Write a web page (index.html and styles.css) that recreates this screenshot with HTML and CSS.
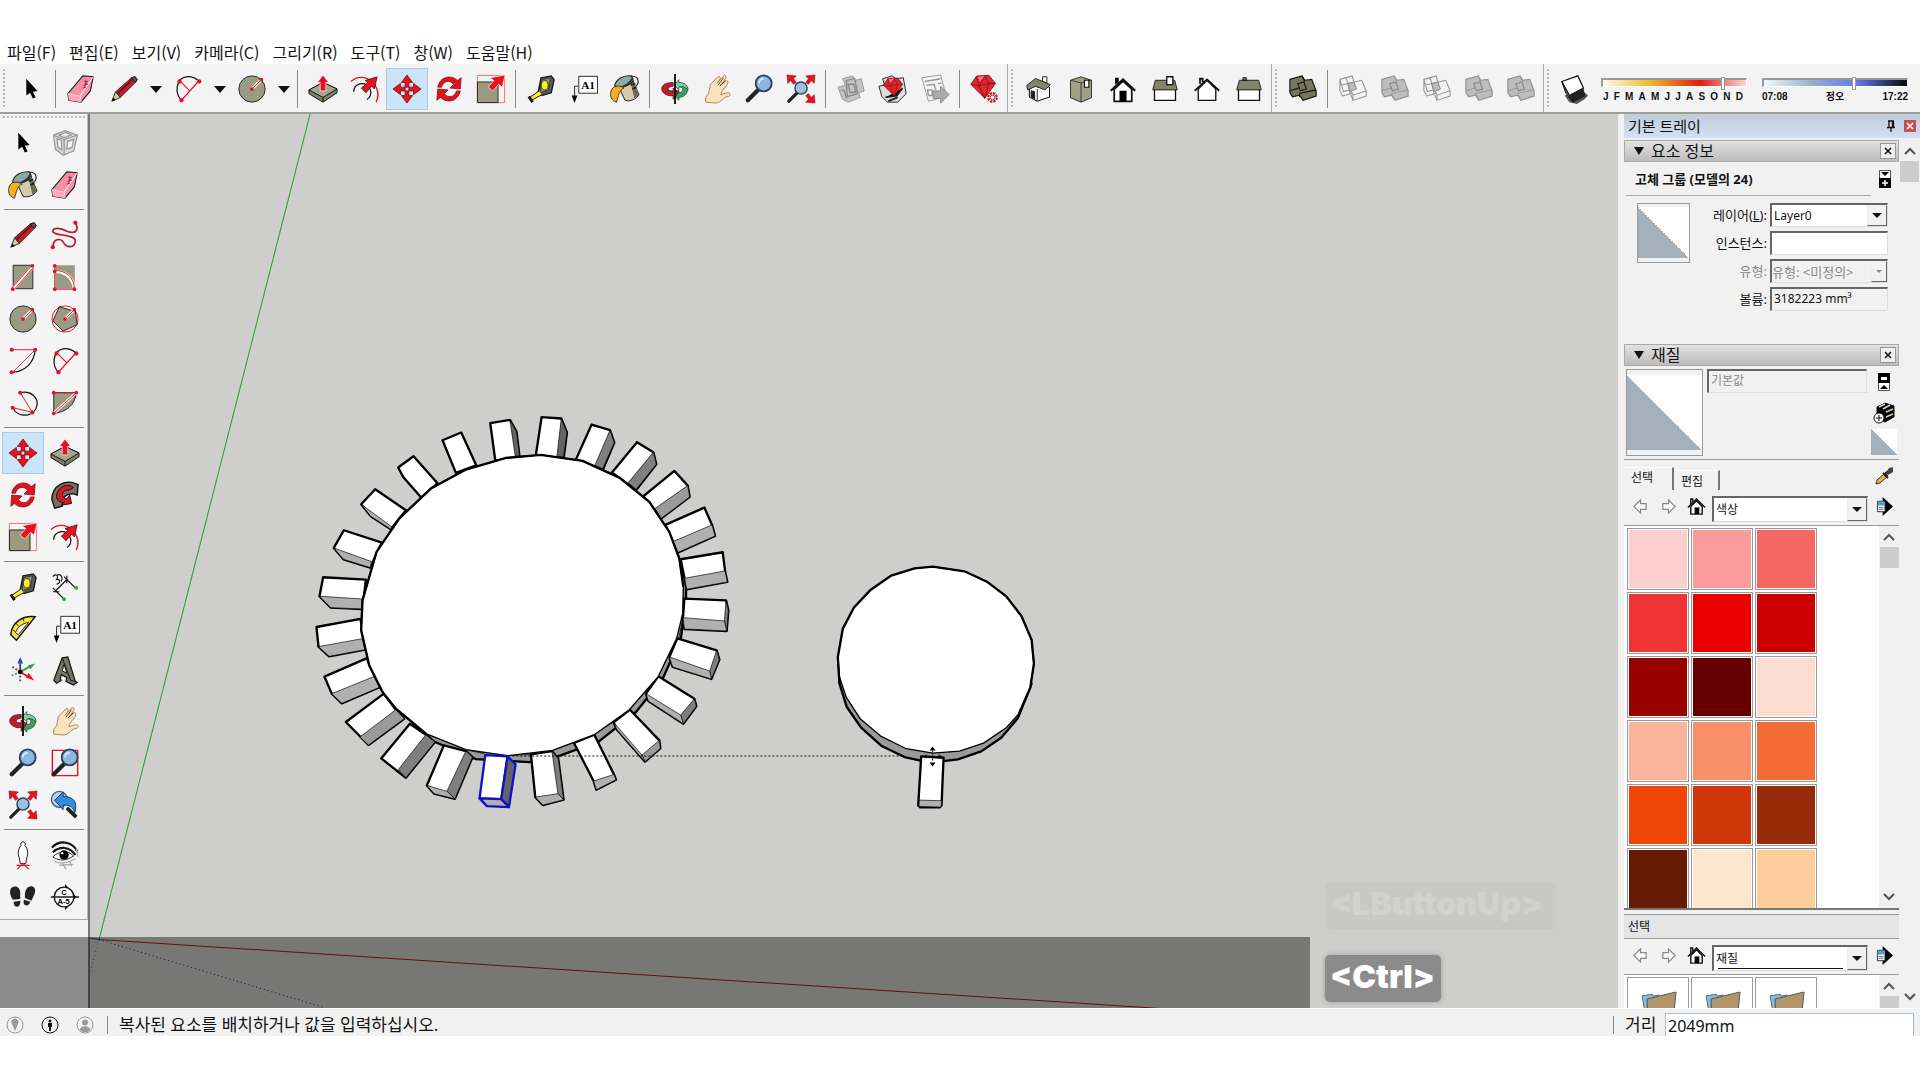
FILE: index.html
```html
<!DOCTYPE html>
<html lang="ko">
<head>
  <meta charset="UTF-8">
  <meta name="viewport" content="width=device-width, initial-scale=1.0">
  <title>SketchUp</title>
  <link rel="stylesheet" href="styles.css">
</head>
<body>

  <!-- icon set -->
  <svg class="icon-set" aria-hidden="true">
    <symbol id="i-cursor" viewBox="0 0 32 32"><path d="M11 5v18l4-3 3 6 3-1-3-6 5-1z"/></symbol>
    <symbol id="i-eraser" viewBox="0 0 32 32">
      <path d="M18 2l11 1-3 15-10 12-13-2-1-7z" fill="#f78fa7" stroke="#222" stroke-width="1.2"/>
      <path d="M2 21l13 3L29 3M15 24l1 6" fill="none" stroke="#fff"/><path d="M2 21l13 3 1 6-13-2z" fill="#ffa9bb"/>
      <path d="M21 6l-1 2 3 0-3 2 3 1-4 1 2 2-3 1" fill="none" stroke="#7d2740"/>
    </symbol>
    <symbol id="i-pencil" viewBox="0 0 32 32">
      <path d="M7 19L24 4l4-1 2 3-1 2-17 17z" fill="#c8202a" stroke="#222"/><path d="M9 21L26 5" stroke="#6c1016" stroke-width="2"/>
      <path d="M7 19l5 6-9 4z" fill="#d9cfa0" stroke="#222"/><path d="M3 29l4-1-2-3z"/><path d="M24 4l4-1 2 3-2 3z" fill="#555" stroke="#222"/>
    </symbol>
    <symbol id="i-arc" viewBox="0 0 32 32">
      <path d="M10 29C1 21 3 5 14 3c6-1 12 2 15 6" fill="none" stroke="#111" stroke-width="1.3"/>
      <path d="M7 7l11 11M9 28L27 8" stroke="#e8111d" stroke-width="1.2"/><g fill="#e8111d"><circle cx="7" cy="8" r="2.3"/><circle cx="28" cy="8" r="2.3"/><circle cx="9" cy="28" r="2.3"/></g>
    </symbol>
    <symbol id="i-circle" viewBox="0 0 32 32">
      <circle cx="16" cy="16" r="14" fill="#9b9b84" stroke="#222"/><path d="M16 16l9-9" stroke="#fff" stroke-width="3"/><path d="M16 16l9-9" stroke="#e8111d"/>
      <g fill="#e8111d"><circle cx="16" cy="16" r="2"/><circle cx="26" cy="6" r="2"/></g>
    </symbol>
    <symbol id="i-push" viewBox="0 0 32 32">
      <path d="M1 17l15-8 15 7v4L16 30 1 21z" fill="#7f7f6b" stroke="#111"/><path d="M1 17l15-8 15 7-15 9z" fill="#a5a58f" stroke="#111"/><path d="M16 25v5" stroke="#111"/>
      <path d="M16 1l6 8h-3v9h-6V9h-3z" fill="#e8111d" stroke="#fff" stroke-width=".7"/>
    </symbol>
    <symbol id="i-offset" viewBox="0 0 32 32">
      <path d="M1 8C9 1 18 3 24 9s7 14 4 21" fill="none" stroke="#e8111d" stroke-width="1.5"/><path d="M4 19c0-9 12-12 17-4 3 6 0 11-3 12" fill="none" stroke="#111" stroke-width="1.3"/>
      <path d="M29 3l-3 13-3-3-6 7-5-5 7-6-3-2z" fill="#e8111d" stroke="#111" stroke-width=".7"/>
    </symbol>
    <symbol id="i-move" viewBox="0 0 32 32">
      <path id="mv" d="M16 1l6 8h-4v5h-4V9h-4z" fill="#e8111d" stroke="#7a0910" stroke-width=".8"/>
      <use href="#mv" transform="rotate(90 16 16)"/><use href="#mv" transform="rotate(180 16 16)"/><use href="#mv" transform="rotate(270 16 16)"/>
    </symbol>
    <symbol id="i-rotate" viewBox="0 0 32 32">
      <path id="rt" d="M4 14C6 3 18 0 25 7l4-3-1 12-11-1 4-4C17 6 10 7 8 14z" fill="#dd1420" stroke="#8d0a12" stroke-width=".8"/><use href="#rt" transform="rotate(180 16 16)"/>
    </symbol>
    <symbol id="i-scale" viewBox="0 0 32 32">
      <path d="M1.500 1.500h29v29h-29z" fill="none" stroke="#f26b70"/><path d="M1.500 8.500h22v22h-22z" fill="#9b9b84" stroke="#222"/>
      <path d="M31 1l-3 13-4-3-6 7-5-4 6-7-4-3z" fill="#e8111d" stroke="#fff" stroke-width=".7"/>
    </symbol>
    <symbol id="i-tape" viewBox="0 0 32 32">
      <path d="M16 4l11-2 3 4-3 14-10 3-4-4z" fill="#5c5c4e" stroke="#111" stroke-width="1.3"/><path d="M17 6l9-2-2 13-9 3z" fill="#8f8f7b" stroke="#222" stroke-width=".7"/><ellipse cx="20" cy="12" rx="3.600" ry="5" fill="#fdf01d" stroke="#333"/>
      <path d="M14 18L4 25l2 3 11-6" fill="#fdf01d" stroke="#111"/><path d="M3 24l4 6" stroke="#111" stroke-width="3"/>
    </symbol>
    <symbol id="i-text" viewBox="0 0 32 32">
      <path d="M11.500 2.500h20v18h-20z" fill="#fff" stroke="#222"/><path d="M11 13H7v12" fill="none" stroke="#222"/><path d="M4 23h6l-3 8z"/>
      <text x="14" y="16" class="glyph-a1">A1</text>
    </symbol>
    <symbol id="i-paint" viewBox="0 0 32 32">
      <path d="M21 5c2-5 9-2 9 3 0 3-2 5-4 6" fill="none" stroke="#222" stroke-width="1.200"/>
      <path d="M9 13L24 7l7 15c-3 5-10 8-15 6z" fill="#d3cca9" stroke="#111"/><path d="M22 9l3-2 6 15-5 4z" fill="#6e6a5a"/><path d="M22 12l5-2M24 16l4-2" stroke="#222" stroke-width="2"/>
      <path d="M5 13C6 6 13 1 23 2l2 5c-5 6-12 8-20 6z" fill="#8fa8a9" stroke="#222" stroke-width="1.200"/><path d="M24 4c-2 6-9 10-16 11" fill="none" stroke="#333" stroke-width="2"/>
      <path d="M2 16c3-4 9-4 13-1-5 2-6 8-8 15-6-1-8-8-5-14z" fill="#f8ae1b" stroke="#333"/>
    </symbol>
    <symbol id="i-orbit" viewBox="0 0 32 32">
      <path d="M17 10c9-2 14 3 12 9-1 4-6 6-9 6v3l-5-6 5-5v3c4 0 5-3 4-5-2-2-5-1-7-1z" fill="#3d9d63" stroke="#14522b" stroke-width=".8"/><path d="M15 12l5-6v3c6 0 10 3 10 8-4-4-7-4-10-3v3z" fill="#86cda3" stroke="#14522b" stroke-width=".8"/>
      <path d="M14 9C6 9 1 12 2 17c1 4 6 7 12 6v4l6-8-6-4v3c-4 0-6-1-5-3 1-1 3-2 5-2z" fill="#b9202e" stroke="#5b0c14" stroke-width=".8"/><path d="M16 0v32" stroke="#111" stroke-width="2"/>
    </symbol>
    <symbol id="i-pan" viewBox="0 0 32 32">
      <path d="M4 30c-1-5 1-7 3-9l2-10 8-8c2-1 3 1 2 3l-3 4 7-8c2-1 4 1 2 3l-5 7 6-5c2 0 2 2 1 4l-6 8-1 3 7-2c4 0 4 3 1 4-5 0-7 6-13 7z" fill="#f8e2bd" stroke="#a08458"/><path d="M17 12l6-8M19 13l6-6" stroke="#4f402a"/>
    </symbol>
    <symbol id="i-zoom" viewBox="0 0 32 32">
      <path d="M15 17L4 28" stroke="#222" stroke-width="4.500" stroke-linecap="round"/><circle cx="21" cy="10" r="8.500" fill="#8db6e0" stroke="#2a4263" stroke-width="2"/><path d="M16 10c0-3 2-5 5-5" stroke="#d5e7f8" stroke-width="2" fill="none"/>
    </symbol>
    <symbol id="i-extents" viewBox="0 0 32 32">
      <path id="ex" d="M1 1l10 1-3 3 3 4-3 2-3-4-3 3z" fill="#e8111d" stroke="#8d0a12" stroke-width=".6"/><use href="#ex" transform="matrix(-1 0 0 1 32 0)"/><use href="#ex" transform="rotate(180 16 16)"/>
      <path d="M13 19L3 29" stroke="#222" stroke-width="3.500" stroke-linecap="round"/><circle cx="16" cy="15" r="6.500" fill="#9dc0e2" stroke="#2a4263" stroke-width="1.500"/>
    </symbol>
    <symbol id="i-window" viewBox="0 0 32 32"><path d="M2.500 2.500h27v27h-27z" fill="none" stroke="#e8111d" stroke-width="1.500"/><use href="#i-zoom"/></symbol>
    <symbol id="i-previous" viewBox="0 0 32 32">
      <circle cx="10" cy="10" r="8.500" fill="#b6cde4" stroke="#445c78" stroke-width="1.300"/><path d="M18 19l10 10" stroke="#222" stroke-width="4"/>
      <path d="M5 11l9-9v5c12 0 16 6 12 19 0-8-5-10-12-10v5z" fill="#2d8ee0" stroke="#17395f"/>
    </symbol>
    <symbol id="i-warehouse" viewBox="0 0 32 32">
      <path d="M2 14l8-2-3-7 11-3 2 5 7-2 3 13-6 2 2 5-13 5-6-3z" fill="#c4c4c4" stroke="#999"/><path d="M11 7l9-2 3 16-11 3zM13 11h6l2 8-6 1zM5 17l4 1 2 8" fill="none" stroke="#8c8c8c" stroke-width="1.500"/>
    </symbol>
    <symbol id="i-gem" viewBox="0 0 32 32"><path d="M8 2l15-1 8 10-13 18L1 12z" fill="#e2242c" stroke="#6c0c10"/><path d="M1 12l10 2 12-3 8 0M8 2l3 12 7 15 5-18-5-9-7 12" fill="none" stroke="#8a0e14"/><path d="M9 3l9-1-6 7z" fill="#f4777b"/></symbol>
    <symbol id="i-extension" viewBox="0 0 32 32">
      <path d="M1 13l6-1-2-7 10-3 4 3 8-1 3 17-9 9-11 0-6-6z" fill="#ddd" stroke="#222"/><path d="M8 25l12-2 6-8M11 29l10-4" stroke="#222" stroke-width="2"/><use href="#i-gem" x="5" y="3" width="22" height="23"/>
    </symbol>
    <symbol id="i-share" viewBox="0 0 32 32">
      <path d="M2 4l20-3 6 23-19 5z" fill="#f5f5f5" stroke="#999"/><path d="M5 8l17-3M7 12l8-1 2 6M19 10l4 0M8 17h5v6H9z" fill="none" stroke="#999" stroke-width="1.500"/><path d="M14 18h8v-5l9 9-9 9v-5h-8z" fill="#aaa" stroke="#888"/>
    </symbol>
    <symbol id="i-manager" viewBox="0 0 32 32"><use href="#i-gem" width="28" height="29"/><circle cx="24" cy="25" r="4.500" fill="#fff" stroke="#b7222a" stroke-width="2.500" stroke-dasharray="2.500 1"/><circle cx="24" cy="25" r="2.500" fill="none" stroke="#b7222a"/></symbol>
    <symbol id="i-iso" viewBox="0 0 32 32">
      <path d="M5 14L13 8l15 6v11l-14 5-9-5z" fill="#fff" stroke="#111" stroke-width="1.200"/><path d="M2 12l10-8 17 7-6 6-11-4-9 4z" fill="#85856f" stroke="#111"/><path d="M14 16v13M7 18l4 1v8l-4-2z" fill="#222" stroke="#111"/><path d="M20 2h5v7l-5-2z" fill="#fff" stroke="#111"/>
    </symbol>
    <symbol id="i-top" viewBox="0 0 32 32"><path d="M4 6l12-4 12 4v20l-12 5-12-5z" fill="#a09f87" stroke="#222"/><path d="M4 6l12 3 12-3M16 9v22" fill="none" stroke="#333"/><path d="M20 6h5v8h-5z" fill="#fff" stroke="#111" stroke-width="1.300"/></symbol>
    <symbol id="i-front" viewBox="0 0 32 32"><path d="M6 16v14h20V16L16 7z" fill="#fff" stroke="#111" stroke-width="2"/><path d="M2 18L16 5l14 13" fill="none" stroke="#111" stroke-width="2.500"/><path d="M12 18h8v12h-8zM7 3h4v5l-4 3z"/></symbol>
    <symbol id="i-right" viewBox="0 0 32 32"><path d="M4 14h24v15H4z" fill="#fff" stroke="#111" stroke-width="1.500"/><path d="M5 6h22l3 11H2z" fill="#85856f" stroke="#111"/><path d="M18 2h7v9h-7z" fill="#fff" stroke="#111" stroke-width="1.500"/></symbol>
    <symbol id="i-back" viewBox="0 0 32 32"><path d="M6 16v13h20V16L16 6z" fill="#fff" stroke="#111" stroke-width="1.500"/><path d="M2 18L16 5l14 13M8 10V4h3v4" fill="none" stroke="#111" stroke-width="2"/></symbol>
    <symbol id="i-left" viewBox="0 0 32 32"><path d="M4 14h24v15H4z" fill="#fff" stroke="#111" stroke-width="1.500"/><path d="M5 6h22l3 11H2zM9 3h4v3H9z" fill="#85856f" stroke="#111"/></symbol>
    <symbol id="i-shell" viewBox="0 0 32 32"><path d="M1 5l14-4 3 5 8-1 5 13v6l-15 5-4-6-8 2-3-5z" fill="#77765f" stroke="#151512" stroke-width="1.300"/><path d="M10 10l7-2 3 8-7 2zM1 18l10-3M12 21l19-4M15 1l3 7M12 21v4" fill="none" stroke="#151512" stroke-width="1.200"/></symbol>
    <symbol id="i-solid" viewBox="0 0 32 32"><path d="M1 5l14-4 3 5 8-1 5 13v6l-15 5-4-6-8 2-3-5z" fill="#bdbdbd" stroke="#929292" stroke-width="1.300"/><path d="M1 18l10-3M12 21l19-4M12 21l4 8M15 1l3 7" fill="none" stroke="#929292"/><path d="M10 10l7-2 3 8-7 2z" fill="#bbb" stroke="#888" stroke-width="1.300"/></symbol>
    <symbol id="i-solid-line" viewBox="0 0 32 32"><path d="M1 5l14-4 4 14-14 4zM1 5v13l3 6 11-3M1 12l16-4M10 10l16-4 5 12-15 5zM31 18v6l-15 5v-6M10 10l2 9 4 10M8 3l4 12" fill="none" stroke="#959595" stroke-width="1.200"/><path d="M10 10l7-2 3 8-7 3z" fill="#bbb" stroke="#888"/></symbol>
    <symbol id="i-shadow" viewBox="0 0 32 32"><path d="M5 23l18-6 7 6-4 4-8 5-8-2z" fill="#555"/><path d="M2 8l17-6 6 13-15 8z" fill="#fff" stroke="#111" stroke-width="1.300"/><path d="M10 23l15-8 2 9-13 6z" fill="#222"/><path d="M2 8l8 15 4 7-8-10z" fill="#666" stroke="#111"/></symbol>
    <symbol id="i-component" viewBox="0 0 32 32"><path d="M3 7l13-5 14 5-4 18-12 5-9-7z" fill="#ddd" stroke="#999" stroke-width="1.500"/><path d="M3 7l12 5 15-5M15 12v18M7 11l5 2v11l-4-3zM19 14l7-2-2 9-6 2zM9 7l8-3 6 3-8 3z" fill="#f5f5f5" stroke="#999" stroke-width="1.500"/></symbol>
    <symbol id="i-freehand" viewBox="0 0 32 32"><path d="M27 3c5 9-1 12-9 9-7-4-15-4-15 0 0 5 24 3 24 10 0 8-9 8-12 3-3-6-11-6-12 3" fill="none" stroke="#b8192b" stroke-width="1.800"/><g fill="#e8111d"><circle cx="27" cy="3" r="2.300"/><circle cx="3" cy="29" r="2.300"/></g></symbol>
    <symbol id="i-rect" viewBox="0 0 32 32"><path d="M5.500 3.500h21v25h-21z" fill="#9b9b84" stroke="#222"/><path d="M5 29L27 4" stroke="#fff" stroke-width="4"/><path d="M4 28L25 4M7 29L27 6" stroke="#e8111d"/><g fill="#e8111d"><circle cx="5" cy="29" r="2"/><circle cx="26" cy="4" r="2"/></g></symbol>
    <symbol id="i-rect-rot" viewBox="0 0 32 32"><path d="M5.500 3.500h21v25h-21z" fill="#9b9b84"/><path d="M5 10c12 0 20 7 21 19" fill="none" stroke="#fff" stroke-width="3.500"/><path d="M5 4v25h21M5 9c12 0 21 7 21 20" fill="none" stroke="#e8111d"/><g fill="#e8111d"><circle cx="5" cy="4" r="2"/><circle cx="5" cy="10" r="2"/><circle cx="5" cy="29" r="2"/><circle cx="26" cy="29" r="2"/></g></symbol>
    <symbol id="i-polygon" viewBox="0 0 32 32"><circle cx="16" cy="16" r="14" fill="none" stroke="#e8111d"/><path d="M10 3l17 5 2 14-15 7L3 18z" fill="#9b9b84" stroke="#222"/><path d="M16 16l9-9" stroke="#fff" stroke-width="3"/><path d="M16 16l9-9" stroke="#e8111d"/><g fill="#e8111d"><circle cx="16" cy="16" r="2"/><circle cx="26" cy="6" r="2"/></g></symbol>
    <symbol id="i-arc-a" viewBox="0 0 32 32"><path d="M29 4c-1 14-11 23-24 24" fill="none" stroke="#111" stroke-width="1.300"/><path d="M4 4h25L5 28" fill="none" stroke="#e8111d"/><g fill="#e8111d"><circle cx="4" cy="4" r="2.200"/><circle cx="29" cy="4" r="2.200"/><circle cx="4" cy="28" r="2.200"/></g></symbol>
    <symbol id="i-arc-b" viewBox="0 0 32 32"><path d="M13 5c12-3 19 6 18 13-2 13-20 15-26 3" fill="none" stroke="#111" stroke-width="1.300"/><path d="M13 5l13 21-21-5" fill="none" stroke="#e8111d"/><g fill="#e8111d"><circle cx="13" cy="5" r="2.200"/><circle cx="26" cy="26" r="2.200"/><circle cx="5" cy="21" r="2.200"/></g></symbol>
    <symbol id="i-pie" viewBox="0 0 32 32"><path d="M4 5h24C27 18 17 26 4 27z" fill="#9b9b84" stroke="#222"/><path d="M4 27L28 5" stroke="#fff" stroke-width="3"/><path d="M28 5L4 27M4 5h24" stroke="#e8111d"/><g fill="#e8111d"><circle cx="4" cy="5" r="2"/><circle cx="28" cy="5" r="2"/><circle cx="4" cy="27" r="2"/></g></symbol>
    <symbol id="i-follow" viewBox="0 0 32 32"><path d="M2 21C2 6 17-2 30 5l-1 11c-7-3-15 0-15 6l-1 6-8 2z" fill="#73735f" stroke="#111" stroke-width="1.500"/><path d="M7 16C9 6 20 3 25 8l-5 3c-8-1-9 9-2 9l3-4 2 9-11 2 3-3C8 24 7 20 7 16z" fill="#d91722" stroke="#111"/></symbol>
    <symbol id="i-dimension" viewBox="0 0 32 32"><path d="M6 20L18 8M6 20l9 9M18 8l9 9M3 17l6 6M15 5l6 6M3 21h7M18 4v8" stroke="#111" stroke-width="1.200"/><path d="M3 5c3-4 7-1 4 3 4-1 5 4 0 5M8 3c4-1 6 3 4 7" fill="none" stroke="#111" stroke-width="1.200"/><g fill="#38a23c"><circle cx="15" cy="29" r="2"/><circle cx="28" cy="17" r="2"/></g></symbol>
    <symbol id="i-protractor" viewBox="0 0 32 32"><path d="M3 22C4 9 16 1 29 3L9 28z" fill="#f5e63a" stroke="#111" stroke-width="1.500"/><path d="M8 20c2-6 7-10 14-11L11 22z" fill="#f2f2f2" stroke="#222"/><path d="M5 17l3 2M9 10l2 3M16 5l1 3" stroke="#222"/></symbol>
    <symbol id="i-axes" viewBox="0 0 32 32"><g fill="none" stroke-width="2"><path d="M13 17V6" stroke="#234f9b"/><path d="M13 17v10" stroke="#234f9b" stroke-dasharray="2 2"/><path d="M13 17l11-6" stroke="#38a23c"/><path d="M13 17L4 21" stroke="#38a23c" stroke-dasharray="2 2"/><path d="M13 17l10 6" stroke="#e8111d"/><path d="M13 17l-9-6" stroke="#e8111d" stroke-dasharray="2 2"/></g><path d="M10 8l3-7 3 7z" fill="#234f9b"/><path d="M21 10l8-2-5 6z" fill="#38a23c"/><path d="M19 23l3-5 6 8z" fill="#e8111d"/><circle cx="13" cy="17" r="2.500"/></symbol>
    <symbol id="i-text3d" viewBox="0 0 32 32"><path d="M4 26L13 2l6-1 8 26 2 1-4 3-8-4 1-4-6-3-1 4 1 2-5 3z" fill="#77756a" stroke="#111" stroke-width="1.300"/><path d="M15 9l3 9-5-2z" fill="#f2f2f2" stroke="#111"/><path d="M13 2l9 24 5 1" fill="none" stroke="#111"/></symbol>
    <symbol id="i-camera" viewBox="0 0 32 32"><path d="M14 6c-3 3-4 8-2 13l1 6h6l1-6c2-5 1-10-2-13a2.500 2.500 0 1 0-4 0z" fill="#fff" stroke="#111"/><path d="M10 31l6-6 6 6M9 27h14" fill="none" stroke="#e8111d" stroke-width="1.300"/></symbol>
    <symbol id="i-eye" viewBox="0 0 32 32"><path d="M2 8C11-1 24 2 29 12M3 13C11 6 21 7 27 16" fill="none" stroke="#111" stroke-width="2.300"/><path d="M3 18c6-6 16-8 22-1-7 5-15 6-22 1z" fill="#fff" stroke="#222"/><circle cx="15" cy="16" r="5"/><circle cx="13" cy="14" r="1.300" fill="#fff"/><path d="M5 23c8 3 15 1 22-3M10 27l15-1M13 24l4 7M21 23l2 5M28 9l2 9" stroke="#aaa" fill="none" stroke-width="1.500"/></symbol>
    <symbol id="i-walk" viewBox="0 0 32 32"><path d="M3 7c4-4 9-2 10 3v8l-8 1C3 15 1 11 3 7zM6 21l7-1c1 8-7 9-7 1zM20 7c3-4 9-3 9 2 0 4-3 8-4 11l-7-3c0-4 0-7 2-10zM17 19l7 2c-3 7-9 4-7-2z" fill="#222"/></symbol>
    <symbol id="i-section" viewBox="0 0 32 32"><path d="M16 2l12 14-12 14z"/><circle cx="15" cy="16" r="10.500" fill="#f8f8f8" stroke="#111" stroke-width="1.500"/><path d="M1 16h30" stroke="#111" stroke-width="1.500"/><text x="12" y="14" class="glyph-section">C</text><text x="8" y="23" class="glyph-section">A-5</text></symbol>
    <symbol id="i-home" viewBox="0 0 20 20"><path d="M4 10v8h12v-8l-6-6z" fill="#fff" stroke="#111" stroke-width="1.500"/><path d="M1 11l9-9 9 9M4 8V2h2v3" fill="none" stroke="#111" stroke-width="1.500"/><path d="M8 11h5v7H8z"/></symbol>
    <symbol id="i-arrow-left" viewBox="0 0 16 16"><path d="M1 8l7-7v4h6v6H8v4z" fill="#fafafa" stroke="#888" stroke-width="1.300"/></symbol>
    <symbol id="i-details" viewBox="0 0 18 20"><path d="M7 0l11 10-11 10z"/><path d="M1.500 4.500h8v11h-8z" fill="#fff" stroke="#234"/><path d="M2 5h7v4H2z" fill="#5e97dd"/><path d="M3 11h5M3 13h5" stroke="#567"/></symbol>
    <symbol id="i-expand" viewBox="0 0 12 18"><path d="M.5.5h11v17H.5z" fill="#fff" stroke="#555"/><path d="M2 2h8l-4 4zM0 8h12v10H0z"/><path d="M3 13h6M6 10v6" stroke="#fff" stroke-width="1.500"/></symbol>
    <symbol id="i-collapse" viewBox="0 0 12 18"><path d="M.5.5h11v17H.5z" fill="#fff" stroke="#555"/><path d="M0 0h12v10H0zM2 16h8l-4-4z"/><path d="M3 4h6v3H3z" fill="#fff"/></symbol>
    <symbol id="i-create" viewBox="0 0 22 22"><path d="M4 5l8-4 9 3v11l-9 5-8-4z" stroke="#111"/><path d="M6 5l6-3M10 7l7-4M13 10l7-3M13 15l7-3" stroke="#d8d4a6" stroke-width="1.500"/><circle cx="6" cy="16" r="5" fill="#fff" stroke="#111"/><path d="M3 16h6M6 13v6" stroke="#111"/></symbol>
    <symbol id="i-dropper" viewBox="0 0 20 20"><path d="M2 18l1-4 8-7 3 3-8 7z" fill="#dcb551" stroke="#333"/><path d="M9 7l5 5M11 8l3-3" stroke="#222" stroke-width="2"/><path d="M12 7l3-5 4-1v5l-5 3z" fill="#444"/></symbol>
    <symbol id="i-folder" viewBox="0 0 36 36"><path d="M1 6l10-2 1 2 6-1 2 28H6z" fill="#8fb6d6" stroke="#578"/><path d="M6 9l29-7-3 31H7z" fill="#b3946b" stroke="#555"/></symbol>
    <symbol id="i-up" viewBox="0 0 12 8"><path d="M1 7l5-5 5 5" fill="none" stroke="#555" stroke-width="2"/></symbol>
    <symbol id="i-down" viewBox="0 0 12 8"><path d="M1 1l5 5 5-5" fill="none" stroke="#555" stroke-width="2"/></symbol>
    <symbol id="i-x" viewBox="0 0 8 8"><path d="M1 1l6 6M7 1L1 7" stroke="currentColor" stroke-width="1.500"/></symbol>
  </svg>

  <nav class="menubar">
    <button>파일(F)</button>
    <button>편집(E)</button>
    <button>보기(V)</button>
    <button>카메라(C)</button>
    <button>그리기(R)</button>
    <button>도구(T)</button>
    <button>창(W)</button>
    <button>도움말(H)</button>
  </nav>

  <header class="toolbar">
    <div class="group">
      <span class="grip"></span>
      <button class="tool" aria-label="선택"><svg><use href="#i-cursor"/></svg></button>
      <span class="sep"></span>
      <button class="tool" aria-label="지우기"><svg><use href="#i-eraser"/></svg></button>
      <div class="split"><button class="tool" aria-label="선"><svg><use href="#i-pencil"/></svg></button><button class="more" aria-label="선 도구"></button></div>
      <div class="split"><button class="tool" aria-label="호"><svg><use href="#i-arc"/></svg></button><button class="more" aria-label="호 도구"></button></div>
      <div class="split"><button class="tool" aria-label="원"><svg><use href="#i-circle"/></svg></button><button class="more" aria-label="도형 도구"></button></div>
      <span class="sep"></span>
      <button class="tool" aria-label="밀기/끌기"><svg><use href="#i-push"/></svg></button>
      <button class="tool" aria-label="오프셋"><svg><use href="#i-offset"/></svg></button>
      <button class="tool active" aria-label="이동"><svg><use href="#i-move"/></svg></button>
      <button class="tool" aria-label="회전"><svg><use href="#i-rotate"/></svg></button>
      <button class="tool" aria-label="배율"><svg><use href="#i-scale"/></svg></button>
      <span class="sep"></span>
      <button class="tool" aria-label="줄자"><svg><use href="#i-tape"/></svg></button>
      <button class="tool" aria-label="텍스트"><svg><use href="#i-text"/></svg></button>
      <button class="tool" aria-label="페인트통"><svg><use href="#i-paint"/></svg></button>
      <span class="sep"></span>
      <button class="tool" aria-label="궤도"><svg><use href="#i-orbit"/></svg></button>
      <button class="tool" aria-label="이동 보기"><svg><use href="#i-pan"/></svg></button>
      <button class="tool" aria-label="확대/축소"><svg><use href="#i-zoom"/></svg></button>
      <button class="tool" aria-label="범위 확대"><svg><use href="#i-extents"/></svg></button>
      <span class="sep"></span>
      <button class="tool" aria-label="3D Warehouse"><svg><use href="#i-warehouse"/></svg></button>
      <button class="tool" aria-label="Extension Warehouse"><svg><use href="#i-extension"/></svg></button>
      <button class="tool" aria-label="LayOut"><svg><use href="#i-share"/></svg></button>
      <span class="sep"></span>
      <button class="tool" aria-label="확장 관리자"><svg><use href="#i-manager"/></svg></button>
    </div>
    <div class="group">
      <span class="grip"></span>
      <button class="tool" aria-label="등각"><svg class="small"><use href="#i-iso"/></svg></button>
      <button class="tool" aria-label="상단"><svg class="small"><use href="#i-top"/></svg></button>
      <button class="tool" aria-label="앞"><svg class="small"><use href="#i-front"/></svg></button>
      <button class="tool" aria-label="오른쪽"><svg class="small"><use href="#i-right"/></svg></button>
      <button class="tool" aria-label="뒤"><svg class="small"><use href="#i-back"/></svg></button>
      <button class="tool" aria-label="왼쪽"><svg class="small"><use href="#i-left"/></svg></button>
    </div>
    <div class="group">
      <span class="grip"></span>
      <button class="tool" aria-label="외부 쉘"><svg class="small"><use href="#i-shell"/></svg></button>
      <span class="sep"></span>
      <button class="tool" aria-label="교차"><svg class="small"><use href="#i-solid-line"/></svg></button>
      <button class="tool" aria-label="결합"><svg class="small"><use href="#i-solid"/></svg></button>
      <button class="tool" aria-label="빼기"><svg class="small"><use href="#i-solid-line"/></svg></button>
      <button class="tool" aria-label="트리밍"><svg class="small"><use href="#i-solid"/></svg></button>
      <button class="tool" aria-label="분할"><svg class="small"><use href="#i-solid"/></svg></button>
    </div>
    <div class="group shadows">
      <span class="grip"></span>
      <button class="tool" aria-label="그림자"><svg><use href="#i-shadow"/></svg></button>
      <div class="shadow-slider">
        <input type="range" class="range date" min="0" max="100" value="85" aria-label="날짜">
        <div class="months"><span>J</span><span>F</span><span>M</span><span>A</span><span>M</span><span>J</span><span>J</span><span>A</span><span>S</span><span>O</span><span>N</span><span>D</span></div>
      </div>
      <div class="shadow-slider">
        <input type="range" class="range hour" min="0" max="100" value="63" aria-label="시간">
        <div class="hours"><span>07:08</span><span>정오</span><span>17:22</span></div>
      </div>
    </div>
  </header>

  <main class="workspace">
    <aside class="side-tools">
      <span class="grip-row"></span>
      <div class="tool-grid">
        <button class="tool" aria-label="선택"><svg><use href="#i-cursor"/></svg></button>
        <button class="tool" aria-label="구성요소"><svg class="small"><use href="#i-component"/></svg></button>
        <button class="tool" aria-label="페인트통"><svg><use href="#i-paint"/></svg></button>
        <button class="tool" aria-label="지우기"><svg><use href="#i-eraser"/></svg></button>
      </div>
      <div class="tool-grid">
        <button class="tool" aria-label="선"><svg><use href="#i-pencil"/></svg></button>
        <button class="tool" aria-label="자유곡선"><svg><use href="#i-freehand"/></svg></button>
        <button class="tool" aria-label="직사각형"><svg><use href="#i-rect"/></svg></button>
        <button class="tool" aria-label="회전된 직사각형"><svg><use href="#i-rect-rot"/></svg></button>
        <button class="tool" aria-label="원"><svg><use href="#i-circle"/></svg></button>
        <button class="tool" aria-label="다각형"><svg><use href="#i-polygon"/></svg></button>
        <button class="tool" aria-label="호"><svg><use href="#i-arc-a"/></svg></button>
        <button class="tool" aria-label="2점 호"><svg><use href="#i-arc"/></svg></button>
        <button class="tool" aria-label="3점 호"><svg><use href="#i-arc-b"/></svg></button>
        <button class="tool" aria-label="파이"><svg><use href="#i-pie"/></svg></button>
      </div>
      <div class="tool-grid">
        <button class="tool active" aria-label="이동"><svg><use href="#i-move"/></svg></button>
        <button class="tool" aria-label="밀기/끌기"><svg><use href="#i-push"/></svg></button>
        <button class="tool" aria-label="회전"><svg><use href="#i-rotate"/></svg></button>
        <button class="tool" aria-label="따라가기"><svg><use href="#i-follow"/></svg></button>
        <button class="tool" aria-label="배율"><svg><use href="#i-scale"/></svg></button>
        <button class="tool" aria-label="오프셋"><svg><use href="#i-offset"/></svg></button>
      </div>
      <div class="tool-grid">
        <button class="tool" aria-label="줄자"><svg><use href="#i-tape"/></svg></button>
        <button class="tool" aria-label="치수"><svg><use href="#i-dimension"/></svg></button>
        <button class="tool" aria-label="각도기"><svg><use href="#i-protractor"/></svg></button>
        <button class="tool" aria-label="텍스트"><svg><use href="#i-text"/></svg></button>
        <button class="tool" aria-label="축"><svg><use href="#i-axes"/></svg></button>
        <button class="tool" aria-label="3D 텍스트"><svg><use href="#i-text3d"/></svg></button>
      </div>
      <div class="tool-grid">
        <button class="tool" aria-label="궤도"><svg><use href="#i-orbit"/></svg></button>
        <button class="tool" aria-label="이동 보기"><svg><use href="#i-pan"/></svg></button>
        <button class="tool" aria-label="확대/축소"><svg><use href="#i-zoom"/></svg></button>
        <button class="tool" aria-label="창 확대"><svg><use href="#i-window"/></svg></button>
        <button class="tool" aria-label="범위 확대"><svg><use href="#i-extents"/></svg></button>
        <button class="tool" aria-label="이전"><svg><use href="#i-previous"/></svg></button>
      </div>
      <div class="tool-grid">
        <button class="tool" aria-label="카메라 배치"><svg><use href="#i-camera"/></svg></button>
        <button class="tool" aria-label="둘러보기"><svg><use href="#i-eye"/></svg></button>
        <button class="tool" aria-label="걷기"><svg><use href="#i-walk"/></svg></button>
        <button class="tool" aria-label="단면"><svg><use href="#i-section"/></svg></button>
      </div>
    </aside>

    <section class="viewport">
      <svg class="scene" viewBox="91 114 1527 894" preserveAspectRatio="xMinYMin slice">
        <!-- axes -->
        <path class="axis green" d="M311 114L100 939"/>
        <path class="axis red" d="M100 939L1162 1008"/>
        <path class="axis blue" d="M89 937L100 939"/>
        <path class="axis blue dots" d="M100 939L325 1007"/>
        <path class="axis green dots" d="M100 939L90 976"/>

        <!-- big gear -->
        <g transform="translate(300 400) scale(.3333)">
          <path class="solid s3" d="M1150 520L1160 540 1160 600 1145 712 1090 835 1010 935 900 1022 770 1070 690 1085 530 1076 400 1022 380 1000 760 900z"/>
          <path class="thin" d="M1150 655l-12 60M1103 770l-25 55M1035 878l-45 48M940 966l-55 36M820 1028l-62 22M695 1062l-70 4M500 1048l55 12"/>
          <g class="solid">
            <path d="M573 69L632 59 652 95 662 180 588 180z"/>
            <path d="M727 51L786 55 803 97 793 175 709 170z"/>
            <path d="M877 73L932 90 945 127 910 210 828 182z"/>
            <path d="M1013 126L1062 156 1071 192 1010 270 938 217z"/>
            <path d="M1125 212L1165 256 1171 290 1085 355 1032 288z"/>
            <path d="M1215 322L1238 374 1247 407 1135 457 1098 374z"/>
            <path d="M1270 456L1277 512 1284 545 1162 567 1144 477z"/>
            <path d="M1155 595L1280 600 1287 630 1282 692 1155 686 1151 652z"/>
            <path d="M1134 714L1252 750 1260 778 1236 836 1120 800 1110 770z"/>
            <path d="M1077 828L1185 895 1191 918 1152 970 1047 902 1040 880z"/>
            <path d="M992 928L1080 1020 1083 1044 1037 1084 953 988 943 966z"/>
            <path d="M885 1003L944 1122 950 1138 891 1168 883 1142 824 1028z"/>
            <path d="M758 1052L777 1075 793 1198 731 1214 708 1190 695 1062z"/>
            <path d="M434 1035L500 1052 520 1070 467 1195 405 1180 383 1155z"/>
            <path d="M332 970L380 1003 407 1025 320 1132 246 1074z"/>
            <path d="M254 880L290 928 315 955 208 1034 140 965z"/>
            <path d="M202 774L243 860 128 909 98 880 76 829z"/>
            <path d="M184 656L198 748 90 768 58 739 52 680z"/>
            <path d="M200 538L190 626 95 622 61 588 72 531z"/>
            <path d="M248 427L213 502 133 477 104 443 134 390z"/>
            <path d="M320 330L275 387 215 348 186 312 228 267z"/>
            <path d="M415 249L366 292 312 230 297 202 343 168z"/>
            <path d="M531 195L470 218 430 120 486 97z"/>
          </g>
          <g class="thin">
            <path class="s1" d="M632 59L652 95 661 168 648 168zM786 55L803 97 793 170 773 168z"/>
            <path class="s2" d="M932 90L945 127 910 206 887 195zM500 1052L520 1070 467 1195 443 1173zM758 1052L777 1075 793 1198 776 1180zM1280 600L1287 630 1282 692 1275 662z"/>
            <path class="s2" d="M380 1003L407 1025 320 1132 297 1108zM1062 156L1071 192 1010 268 987 247zM1252 750L1260 778 1236 836 1231 812zM1185 895L1191 918 1152 970 1144 944z"/>
            <path class="s3" d="M1165 256L1171 290 1085 355 1067 325zM290 928L315 955 208 1034 182 1010zM1080 1020L1083 1044 1037 1084 1028 1064z"/>
            <path class="s4" d="M1238 374L1247 407 1135 457 1121 424zM1277 512L1284 545 1162 567 1156 534zM226 828L243 860 128 909 98 880zM190 715L198 748 90 768 58 739zM190 596L190 626 95 622 61 588zM217 484L213 502 133 477 104 443zM278 380L275 387 215 348 186 312z"/>
            <path class="s4" d="M1151 652L1275 662 1282 692 1155 686zM1110 770L1231 812 1236 836 1120 800zM1040 880L1144 944 1152 970 1047 902zM943 966L1028 1064 1037 1084 953 988zM944 1122L950 1138 891 1168 883 1142zM708 1190L776 1180 793 1198 731 1214zM383 1155L443 1173 467 1195 405 1180z"/>
          </g>
          <path class="cap" d="M725 164L850 182 960 232 1050 305 1110 395 1140 475 1152 560 1150 640 1132 714 1077 828 990 928 885 1003 760 1050 625 1066 500 1048 380 1000 290 925 250 875 210 795 186 690 190 600 232 455 300 355 395 265 500 208 620 173z"/>
          <path class="rim" d="M380 1000L290 925 250 875 210 795 186 690 190 600 232 455 300 355 395 265 500 208 620 173 725 164 850 182 960 232 1050 305 1110 395 1140 475 1152 560"/>
          <g class="picked">
            <path class="top" d="M558 1064L625 1068 606 1196 541 1194z"/>
            <path class="s1" d="M625 1068L649 1092 629 1220 606 1196z"/>
            <path class="s4" d="M541 1194L606 1196 629 1220 563 1217z"/>
          </g>
        </g>
        <path class="guide" d="M513 755.500H926"/>

        <!-- small gear -->
        <g transform="translate(820 550) scale(.3333)">
          <path class="solid s3" d="M57 320L60 400 82 470 125 532 185 586 255 620 300 630 372 632 415 627 485 603 545 562 595 503 636 400z"/>
          <path class="cap" d="M340 49L435 63 502 94 560 138 606 198 636 268 643 340 632 412 598 490 560 532 492 578 420 602 340 608 260 595 185 558 122 505 80 440 60 380 55 320 70 235 103 172 153 119 215 76 285 54z"/>
          <path class="rim" d="M598 490L632 412 643 340 636 268 606 198 560 138 502 94 435 63 340 49 285 54 215 76 153 119 103 172 70 235 55 320 60 400"/>
          <path class="solid" d="M305 618L372 622 366 765 360 771 302 771 296 765z"/>
          <path class="thin s4" d="M300 749L367 751 364 770 298 768z"/>
        </g>
        <path class="grab" d="M933 746l3 4h-6zM933 766l3-4h-6zM923 756l4-2v4zM943 756l-4-2v4z"/>
        <path class="guide" d="M927 756h12M933 750v12"/>
      </svg>
      <div class="keys">
        <div class="key fading">&lt;LButtonUp&gt;</div>
        <div class="key">&lt;Ctrl&gt;</div>
      </div>
    </section>

    <aside class="tray">
      <div class="tray-title">
        <h1>기본 트레이</h1>
        <button class="pin" aria-label="고정"><svg viewBox="0 0 10 12"><path d="M2 1h6M3 1v6M6.500 1v6M7.500 1v6M1 7.500h8M5 7v5" stroke="#111" stroke-width="1.300"/></svg></button>
        <button class="close-tray" aria-label="닫기"><svg><use href="#i-x"/></svg></button>
      </div>
      <div class="tray-body">
        <div class="panels">
          <section class="panel entity">
            <div class="panel-head"><span class="tri"></span><h2>요소 정보</h2><button aria-label="닫기"><svg><use href="#i-x"/></svg></button></div>
            <div class="entity-title"><h3>고체 그룹 (모델의 24)</h3><svg class="toggle"><use href="#i-expand"/></svg></div>
            <div class="entity-form">
              <div class="paint-face"><span></span></div>
              <div class="fields">
                <label for="layer">레이어(<u>L</u>):</label>
                <div class="combo"><select id="layer"><option>Layer0</option></select><i></i></div>
                <label for="instance">인스턴스:</label>
                <input type="text" id="instance">
                <label for="kind" class="off">유형:</label>
                <div class="combo off"><select id="kind" disabled><option>유형: &lt;미정의&gt;</option></select><i></i></div>
                <label for="volume">볼륨:</label>
                <input type="text" id="volume" class="readonly" value="3182223 mm³" readonly>
              </div>
            </div>
          </section>

          <section class="panel materials">
            <div class="panel-head"><span class="tri"></span><h2>재질</h2><button aria-label="닫기"><svg><use href="#i-x"/></svg></button></div>
            <div class="material-info">
              <div class="paint-face large"><span></span></div>
              <input type="text" class="readonly" value="기본값" aria-label="재질 이름" disabled>
              <div class="material-side">
                <svg class="toggle"><use href="#i-collapse"/></svg>
                <svg class="create"><use href="#i-create"/></svg>
                <div class="mini-face"></div>
              </div>
            </div>
            <div class="tabs"><button class="tab selected">선택</button><button class="tab">편집</button><svg><use href="#i-dropper"/></svg></div>
            <div class="browse">
              <button aria-label="뒤로"><svg><use href="#i-arrow-left"/></svg></button>
              <button aria-label="앞으로" class="forward"><svg><use href="#i-arrow-left"/></svg></button>
              <button aria-label="홈" class="home"><svg><use href="#i-home"/></svg></button>
              <div class="combo"><select aria-label="재질 모음"><option>색상</option></select><i></i></div>
              <button aria-label="자세히" class="details"><svg><use href="#i-details"/></svg></button>
            </div>
            <div class="list">
              <div class="swatches" id="swatches"></div>
              <div class="scroll"><svg><use href="#i-up"/></svg><b></b><svg class="end"><use href="#i-down"/></svg></div>
            </div>
            <h4 class="second-head">선택</h4>
            <div class="browse">
              <button aria-label="뒤로"><svg><use href="#i-arrow-left"/></svg></button>
              <button aria-label="앞으로" class="forward"><svg><use href="#i-arrow-left"/></svg></button>
              <button aria-label="홈" class="home"><svg><use href="#i-home"/></svg></button>
              <div class="combo underlined"><select aria-label="재질 폴더"><option>재질</option></select><i></i></div>
              <button aria-label="자세히" class="details"><svg><use href="#i-details"/></svg></button>
            </div>
            <div class="list folders">
              <div class="swatches">
                <div class="folder"><svg><use href="#i-folder"/></svg></div>
                <div class="folder"><svg><use href="#i-folder"/></svg></div>
                <div class="folder"><svg><use href="#i-folder"/></svg></div>
              </div>
              <div class="scroll"><svg><use href="#i-up"/></svg><b></b></div>
            </div>
          </section>
        </div>
        <div class="scroll outer"><svg><use href="#i-up"/></svg><b></b><svg class="end"><use href="#i-down"/></svg></div>
      </div>
    </aside>
    <div class="shade"></div>
  </main>

  <footer class="status">
    <svg viewBox="0 0 18 18" class="dim"><circle cx="9" cy="9" r="8"/><path d="M9 15L6 8a3.500 3.500 0 1 1 6 0z"/></svg>
    <svg viewBox="0 0 18 18"><circle cx="9" cy="9" r="8"/><path d="M7 7h4v4h-1v4H8v-4H7z"/><circle class="fill" cx="9" cy="5" r="1.500"/></svg>
    <svg viewBox="0 0 18 18" class="dim"><circle cx="9" cy="9" r="8"/><circle class="fill" cx="9" cy="6.500" r="3"/><path d="M4 14c0-5 10-5 10 0-3 3-7 3-10 0z"/></svg>
    <p>복사된 요소를 배치하거나 값을 입력하십시오.</p>
    <div class="measure">
      <label for="distance">거리</label>
      <input type="text" id="distance" value="2049mm">
    </div>
  </footer>

  <script>
    const colors = [
      '#fccfcf', '#f99b9b', '#f56663',
      '#f03333', '#eb0000', '#cc0000',
      '#990000', '#660000', '#fcdccf',
      '#f9b49b', '#f88f66', '#f56b35',
      '#ef4506', '#cf370a', '#972a08',
      '#661b04', '#fde6cf', '#fbcd9b'
    ];

    const swatches = document.querySelector('#swatches');

    colors.forEach(function (color) {
      const button = document.createElement('button');
      button.className = 'swatch';
      button.style.backgroundColor = color;
      button.setAttribute('aria-label', color);
      swatches.appendChild(button);
    });
  </script>
</body>
</html>
```
FILE: styles.css
```css
* {
    box-sizing: border-box;
}

body {
    display: flex;
    flex-direction: column;
    height: 100vh;
    margin: 0;
    padding: 40px 0 44px;
    background-color: #fff;
    color: #111;
    font-family: "Noto Sans", "Noto Sans CJK KR", sans-serif;
    font-size: 12px;
    overflow: hidden;
}

h1, h2, h3, h4, p {
    margin: 0;
    font-weight: normal;
}

button, input, select {
    margin: 0;
    padding: 0;
    border: 0;
    border-radius: 0;
    background: none;
    color: inherit;
    font: inherit;
}

svg {
    display: block;
}

.icon-set {
    display: none;
}

.glyph-a1 {
    font: bold 12px "Liberation Serif", serif;
}

.glyph-section {
    font: bold 8px "Liberation Sans", sans-serif;
}

/* menu */
.menubar {
    display: flex;
    gap: 13px;
    flex: none;
    height: 24px;
    padding-left: 7px;
}

.menubar button {
    font-family: "Noto Sans CJK KR", sans-serif;
    font-size: 16px;
    line-height: 24px;
}

/* top toolbar */
.toolbar {
    display: flex;
    flex: none;
    height: 50px;
    background-color: #f3f3f3;
    border-bottom: 2px solid #9c9f9c;
}

.group {
    display: flex;
    align-items: center;
    padding: 5px 1px 3px 3px;
    border-right: 1px solid #aaa;
}

.grip {
    width: 2px;
    height: 40px;
    margin-right: 5px;
    background: repeating-linear-gradient(#b5b5b5 0 2px, transparent 2px 4px);
}

.tool {
    display: flex;
    flex: none;
    align-items: center;
    justify-content: center;
    width: 42px;
    height: 42px;
}

.tool svg {
    width: 30px;
    height: 30px;
}

.tool svg.small {
    width: 28px;
    height: 28px;
}

.tool.active {
    background-color: #cce4f7;
    border: 1px solid #a3cdf0;
}

.sep {
    width: 1px;
    height: 38px;
    margin: 0 4px 0 3px;
    background-color: #888;
}

.split {
    display: flex;
    margin-left: 1px;
}

.more {
    width: 21px;
}

.more::before, .combo i::before, .tri {
    content: "";
    display: block;
    width: 0;
    margin: 0 auto;
    border: 6px solid transparent;
    border-top: 7px solid #111;
    border-bottom: 0;
}

.shadows {
    flex: 1;
    border-right: 0;
}

.shadow-slider {
    width: 146px;
    margin-left: 5px;
}

.shadow-slider + .shadow-slider {
    margin-left: 15px;
}

.range {
    display: block;
    width: 100%;
    height: 14px;
    appearance: none;
}

.range::-webkit-slider-runnable-track {
    height: 9px;
    border: 1px solid;
    border-width: 2px 1px 1px 2px;
    border-color: #999 #fff #fff #999;
}

.range.date::-webkit-slider-runnable-track {
    background: linear-gradient(to right, #fff8e8, #eebb2f 33%, #e31b12 68%, #f9d8d8);
}

.range.hour::-webkit-slider-runnable-track {
    background: linear-gradient(to right, #f4f5f8, #8fafd0 35%, #6277ee 65%, #080911);
}

.range::-webkit-slider-thumb {
    appearance: none;
    width: 4px;
    height: 13px;
    margin-top: -3px;
    border: 1px solid #999;
    background-color: #fff;
}

.months, .hours {
    display: flex;
    justify-content: space-between;
    font-family: "Liberation Sans", "Noto Sans CJK KR", sans-serif;
    font-size: 10px;
    font-weight: bold;
    line-height: 13px;
}

.months {
    padding: 0 4px 0 2px;
}

/* work area */
.workspace {
    position: relative;
    display: flex;
    flex: 1;
    min-height: 0;
    background-color: #f1f1f1;
}

.shade {
    position: absolute;
    left: 0;
    bottom: 0;
    width: 1310px;
    max-width: 80%;
    height: 71px;
    background-color: rgba(0, 0, 0, 0.42);
}

.side-tools {
    flex: none;
    align-self: flex-start;
    width: 88px;
    padding: 2px 1px 1px 2px;
    border-right: 1px solid #bbb;
    border-bottom: 1px solid #aaa;
    background-color: #f4f4f4;
}

.grip-row {
    display: block;
    height: 2px;
    margin: 0 1px 4px;
    background: repeating-linear-gradient(to right, #b5b5b5 0 2px, transparent 2px 4px);
}

.tool-grid {
    display: flex;
    flex-wrap: wrap;
}

.tool-grid + .tool-grid::before {
    content: "";
    width: 80px;
    height: 1px;
    margin: 3px 2px 4px;
    background-color: #888;
}

.viewport {
    position: relative;
    flex: 1;
    min-width: 0;
    border-left: 2px solid #777;
    border-right: 1px solid #eee;
    background-color: #cececc;
}

.scene {
    position: absolute;
    inset: 0;
    width: 100%;
    height: 100%;
}

.axis {
    fill: none;
    stroke-width: 1;
}

.green {
    stroke: #18a81c;
}

.red {
    stroke: #a3201d;
}

.blue {
    stroke: #1818a0;
}

.dots {
    stroke-dasharray: 1 3;
}

.guide {
    stroke: #111;
    stroke-dasharray: 2 2;
}

.solid {
    fill: #fff;
    stroke: #000;
    stroke-width: 7;
    stroke-linejoin: round;
}

.thin {
    fill: none;
    stroke: #000;
    stroke-width: 2;
}

.s1 {
    fill: #656565;
}

.s2 {
    fill: #7f7f7f;
}

.s3 {
    fill: #9a9a9a;
}

.s4 {
    fill: #b0b0b0;
}

.picked {
    stroke: #1010c8;
    stroke-width: 7;
    stroke-linejoin: round;
}

.top {
    fill: #fff;
}

.cap {
    fill: #fff;
    stroke: #000;
    stroke-width: 4;
}

.rim {
    fill: none;
    stroke: #000;
    stroke-width: 7;
}

.grab {
    fill: #000;
}

/* pressed keys, shown over the model */
.keys {
    position: absolute;
    right: 62px;
    bottom: 6px;
    display: flex;
    flex-direction: column;
    align-items: flex-start;
    gap: 26px;
}

.key {
    height: 47px;
    padding: 0 6px 0 5px;
    border-radius: 5px;
    background-color: #8b8b8b;
    box-shadow: 0 0 5px #999;
    color: #fff;
    font-family: Inter, sans-serif;
    font-size: 32px;
    font-weight: 900;
    line-height: 43px;
}

.key.fading {
    min-width: 231px;
    opacity: 0.06;
    background-color: #777;
}

/* tray */
.tray {
    display: flex;
    flex-direction: column;
    flex: none;
    width: 301px;
    padding-left: 5px;
}

.tray-title {
    display: flex;
    align-items: center;
    flex: none;
    height: 24px;
    padding: 0 4px 0 4px;
    background: linear-gradient(#bfccd9, #d2e0f2);
}

.tray-title h1 {
    flex: 1;
    font-size: 15px;
    line-height: 22px;
}

.pin svg {
    width: 10px;
    height: 12px;
}

.close-tray {
    margin-left: 8px;
    padding: 2px;
    background-color: #c25055;
    color: #fff;
}

.close-tray svg, .panel-head button svg {
    width: 8px;
    height: 8px;
}

.tray-body {
    display: flex;
    flex: 1;
    min-height: 0;
}

.panels {
    display: flex;
    flex-direction: column;
    flex: 1;
    min-width: 0;
    padding-top: 2px;
}

.panel-head {
    display: flex;
    align-items: center;
    flex: none;
    height: 22px;
    padding: 0 2px 0 9px;
    border: 1px solid #aaa;
    background: linear-gradient(#e2e2e2, #bcbcbc);
}

.tri {
    margin: 0;
    border-width: 8px 5px 0;
}

.panel-head h2 {
    flex: 1;
    padding-left: 7px;
    font-size: 16px;
    line-height: 20px;
}

.panel-head button {
    padding: 3px;
    border: 1px solid #999;
    background-color: #eee;
}

.entity {
    flex: none;
    height: 204px;
}

.entity-title {
    display: flex;
    align-items: center;
    justify-content: space-between;
    height: 33px;
    padding: 0 8px 0 11px;
}

.entity-title h3 {
    font-size: 13px;
    font-weight: bold;
}

.toggle {
    width: 12px;
    height: 18px;
}

.entity-form {
    display: flex;
    margin: 0 11px 0 2px;
    padding: 8px 0 0 11px;
}

.entity-form::before {
    content: "";
    position: absolute;
    width: 245px;
    margin: -8px 0 0 -11px;
    border-top: 1px solid #aaa;
}

.paint-face {
    flex: none;
    width: 53px;
    height: 60px;
    padding: 3px 0 4px;
    border: 1px solid #999;
}

.paint-face span {
    display: block;
    height: 100%;
    background: linear-gradient(to top right, #a4b1ba 50%, #fff 50%);
}

.paint-face.large {
    width: 77px;
    height: 87px;
    padding: 5px 0;
}

.fields {
    display: grid;
    flex: 1;
    grid-template-columns: 1fr 118px;
    gap: 4px 3px;
}

.fields label {
    align-self: center;
    font-size: 13px;
    line-height: 18px;
    text-align: right;
}

.combo, input[type=text] {
    width: 100%;
    height: 24px;
    border: 1px solid;
    border-width: 2px 1px 1px 2px;
    border-color: #666 #ddd #ddd #666;
    background-color: #fff;
}

input[type=text] {
    padding: 0 2px;
}

input.readonly {
    padding-bottom: 3px;
    background-color: #f1f1f1;
}

input:disabled {
    color: #888;
}

.combo {
    position: relative;
}

.combo select {
    width: 100%;
    height: 100%;
    padding-left: 2px;
    appearance: none;
    opacity: 1;
}

.combo i {
    position: absolute;
    top: 0;
    right: 0;
    bottom: 0;
    display: flex;
    align-items: center;
    width: 20px;
    border: 1px solid;
    border-color: #eee #666 #666 #eee;
    background-color: #f1f1f1;
    pointer-events: none;
}

.combo i::before {
    border-width: 5px 5px 0;
}

.off, .combo.off {
    background-color: #f1f1f1;
    color: #888;
}

.combo.off select {
    padding-left: 0;
    font-size: 13px;
}

.combo.off i {
    width: 16px;
}

.combo.off i::before {
    border-width: 3px 3px 0;
    border-top-color: #888;
}

.materials {
    display: flex;
    flex: 1;
    flex-direction: column;
    min-height: 0;
}

.material-info {
    display: flex;
    flex: none;
    gap: 4px;
    height: 94px;
    padding: 3px 2px 0 2px;
    border-bottom: 1px solid #999;
}

.material-info input {
    flex: 1;
    min-width: 0;
}

.material-side {
    display: flex;
    flex-direction: column;
    align-items: center;
    gap: 11px;
    width: 26px;
    padding-top: 4px;
}

.create {
    width: 22px;
    height: 22px;
}

.mini-face {
    flex: none;
    width: 26px;
    height: 26px;
    margin-top: -6px;
    background: linear-gradient(to top right, #a4b1ba 50%, #fff 50%);
}

.tabs {
    display: flex;
    flex: none;
    align-items: flex-end;
    height: 30px;
    padding: 0 5px 0 0;
}

.tabs svg {
    width: 20px;
    height: 20px;
    margin: 0 0 4px auto;
}

.tab {
    width: 46px;
    height: 20px;
    padding-right: 8px;
    border-top: 1px solid #fff;
    border-right: 2px solid #777;
}

.tab.selected {
    width: 50px;
    height: 23px;
    padding-right: 12px;
    padding-bottom: 5px;
}

.browse {
    display: flex;
    flex: none;
    align-items: center;
    height: 36px;
    padding: 3px 6px 0 9px;
    border-bottom: 1px solid #999;
}

.browse button {
    padding-bottom: 5px;
}

.browse button svg {
    width: 15px;
    height: 15px;
}

.browse .forward {
    margin-left: 13px;
}

.browse .forward svg {
    transform: rotate(180deg);
}

.browse .home {
    margin: 0 6px 0 11px;
}

.browse .home svg {
    width: 19px;
    height: 19px;
}

.browse .details {
    margin-left: 8px;
}

.browse .details svg {
    width: 17px;
    height: 19px;
}

.browse .combo {
    flex: 1;
    width: auto;
    height: 26px;
}

.underlined::after {
    content: "";
    position: absolute;
    left: 4px;
    right: 24px;
    bottom: 1px;
    border-bottom: 1px solid #111;
}

.list {
    display: flex;
    flex: 1;
    min-height: 0;
    background-color: #fff;
    overflow: hidden;
}

.swatches {
    display: flex;
    flex: 1;
    flex-wrap: wrap;
    align-content: flex-start;
    gap: 2px;
    padding: 2px 60px 0 3px;
}

.swatch, .folder {
    width: 62px;
    height: 62px;
    border: 1px solid #999;
}

.swatch {
    box-shadow: inset 0 0 0 1px #fff;
}

.folder svg {
    width: 36px;
    height: 36px;
    margin: 12px auto 0 13px;
}

.folders {
    flex: none;
    height: 33px;
}

.scroll {
    display: flex;
    flex: none;
    flex-direction: column;
    align-items: center;
    width: 20px;
    padding: 7px 0 7px;
    background-color: #f0f0f0;
}

.scroll svg {
    flex: none;
    width: 12px;
    height: 8px;
}

.scroll b {
    flex: none;
    width: 19px;
    height: 21px;
    margin-top: 6px;
    background-color: #cdcdcd;
}

.scroll .end {
    margin-top: auto;
}

.scroll.outer {
    width: 21px;
    padding-top: 9px;
}

.second-head {
    flex: none;
    height: 31px;
    padding: 3px 4px 0;
    border-top: 2px solid #777;
    border-bottom: 1px solid #999;
    background: linear-gradient(#f1f1f1 4px, #999 4px 5px, #e4e4e4 5px);
    line-height: 28px;
}

/* status bar */
.status {
    display: flex;
    flex: none;
    align-items: center;
    height: 28px;
    padding: 5px 0 0 6px;
    background-color: #f1f1f1;
    border-top: 1px solid #fff;
    overflow: hidden;
}

.status svg {
    width: 18px;
    height: 18px;
    margin-right: 17px;
    fill: #111;
    stroke: none;
}

.status svg.dim {
    fill: #999;
}

.status svg circle:first-child {
    fill: none;
    stroke: #111;
}

.status svg.dim circle:first-child {
    stroke: #999;
}

.status p {
    margin-left: -4px;
    padding-left: 11px;
    border-left: 1px solid #888;
    font-size: 17px;
    line-height: 18px;
}

.measure {
    display: flex;
    align-items: center;
    width: 307px;
    margin-left: auto;
    padding-right: 6px;
    font-size: 16px;
    line-height: 18px;
}

.measure label {
    flex: none;
    width: 52px;
    padding-left: 11px;
    border-left: 1px solid #888;
    font-size: 17px;
}

.measure input {
    flex: 1;
    height: 24px;
    border: 1px solid #a9bccf;
    border-bottom: 0;
}
```
